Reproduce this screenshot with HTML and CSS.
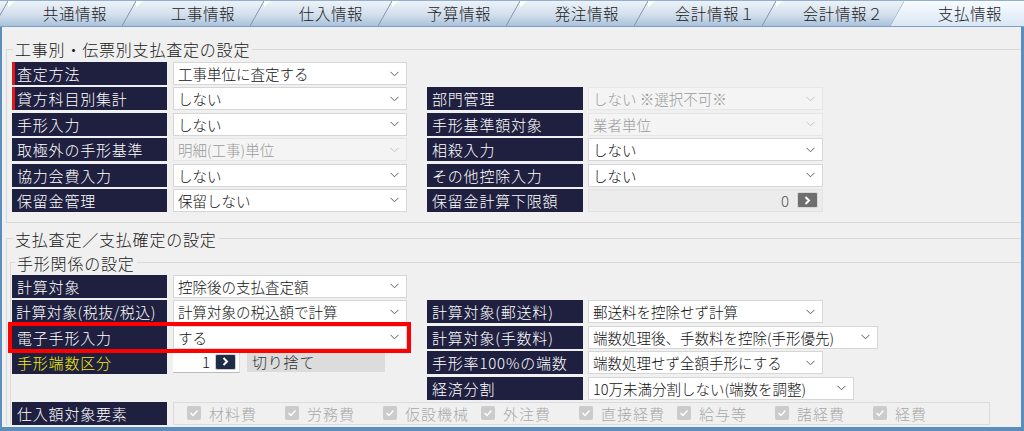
FILE: index.html
```html
<!DOCTYPE html>
<html lang="ja">
<head>
<meta charset="utf-8">
<title>支払情報</title>
<link rel="stylesheet" href="styles.css">
</head>
<body>
<div class="window">
  <div class="tabs">
    <div class="tab">共通情報</div>
    <div class="tab">工事情報</div>
    <div class="tab">仕入情報</div>
    <div class="tab">予算情報</div>
    <div class="tab">発注情報</div>
    <div class="tab">会計情報１</div>
    <div class="tab">会計情報２</div>
    <div class="tab active">支払情報</div>
  </div>
  <div class="content">
    <fieldset class="group g1">
      <legend>工事別・伝票別支払査定の設定</legend>
      <div class="grid">
        <div class="field"><div class="label req">査定方法</div><div class="select"><span>工事単位に査定する</span><svg class="chev" width="9" height="6" viewBox="0 0 9 6"><polyline points="0.5,0.8 4.5,4.8 8.5,0.8"/></svg></div></div>
        <div></div>
        <div class="field"><div class="label req">貸方科目別集計</div><div class="select"><span>しない</span><svg class="chev" width="9" height="6" viewBox="0 0 9 6"><polyline points="0.5,0.8 4.5,4.8 8.5,0.8"/></svg></div></div>
        <div class="field r"><div class="label">部門管理</div><div class="select dis"><span>しない ※選択不可※</span><svg class="chev" width="9" height="6" viewBox="0 0 9 6"><polyline points="0.5,0.8 4.5,4.8 8.5,0.8"/></svg></div></div>
        <div class="field"><div class="label">手形入力</div><div class="select"><span>しない</span><svg class="chev" width="9" height="6" viewBox="0 0 9 6"><polyline points="0.5,0.8 4.5,4.8 8.5,0.8"/></svg></div></div>
        <div class="field r"><div class="label">手形基準額対象</div><div class="select dis"><span>業者単位</span><svg class="chev" width="9" height="6" viewBox="0 0 9 6"><polyline points="0.5,0.8 4.5,4.8 8.5,0.8"/></svg></div></div>
        <div class="field"><div class="label">取極外の手形基準</div><div class="select dis"><span>明細(工事)単位</span><svg class="chev" width="9" height="6" viewBox="0 0 9 6"><polyline points="0.5,0.8 4.5,4.8 8.5,0.8"/></svg></div></div>
        <div class="field r"><div class="label">相殺入力</div><div class="select"><span>しない</span><svg class="chev" width="9" height="6" viewBox="0 0 9 6"><polyline points="0.5,0.8 4.5,4.8 8.5,0.8"/></svg></div></div>
        <div class="field"><div class="label">協力会費入力</div><div class="select"><span>しない</span><svg class="chev" width="9" height="6" viewBox="0 0 9 6"><polyline points="0.5,0.8 4.5,4.8 8.5,0.8"/></svg></div></div>
        <div class="field r"><div class="label">その他控除入力</div><div class="select"><span>しない</span><svg class="chev" width="9" height="6" viewBox="0 0 9 6"><polyline points="0.5,0.8 4.5,4.8 8.5,0.8"/></svg></div></div>
        <div class="field"><div class="label">保留金管理</div><div class="select"><span>保留しない</span><svg class="chev" width="9" height="6" viewBox="0 0 9 6"><polyline points="0.5,0.8 4.5,4.8 8.5,0.8"/></svg></div></div>
        <div class="field r"><div class="label">保留金計算下限額</div><div class="numfield"><span class="num">0</span><span class="btn gray"><svg width="7" height="9" viewBox="0 0 7 9"><polyline points="1.5,1 5,4.5 1.5,8"/></svg></span></div></div>
      </div>
    </fieldset>

    <fieldset class="group g2">
      <legend>支払査定／支払確定の設定</legend>
      <fieldset class="group g3">
        <legend>手形関係の設定</legend>
        <div class="grid">
          <div class="field"><div class="label">計算対象</div><div class="select"><span>控除後の支払査定額</span><svg class="chev" width="9" height="6" viewBox="0 0 9 6"><polyline points="0.5,0.8 4.5,4.8 8.5,0.8"/></svg></div></div>
          <div></div>
          <div class="field"><div class="label tight">計算対象(税抜/税込)</div><div class="select"><span>計算対象の税込額で計算</span><svg class="chev" width="9" height="6" viewBox="0 0 9 6"><polyline points="0.5,0.8 4.5,4.8 8.5,0.8"/></svg></div></div>
          <div class="field r"><div class="label">計算対象(郵送料)</div><div class="select"><span>郵送料を控除せず計算</span><svg class="chev" width="9" height="6" viewBox="0 0 9 6"><polyline points="0.5,0.8 4.5,4.8 8.5,0.8"/></svg></div></div>
          <div class="field marked"><div class="label">電子手形入力</div><div class="select"><span>する</span><svg class="chev" width="9" height="6" viewBox="0 0 9 6"><polyline points="0.5,0.8 4.5,4.8 8.5,0.8"/></svg></div></div>
          <div class="field r"><div class="label">計算対象(手数料)</div><div class="select w290"><span>端数処理後、手数料を控除(手形優先)</span><svg class="chev" width="9" height="6" viewBox="0 0 9 6"><polyline points="0.5,0.8 4.5,4.8 8.5,0.8"/></svg></div></div>
          <div class="field"><div class="label yellow">手形端数区分</div><div class="spin"><span class="num">1</span><span class="btn navy"><svg width="7" height="9" viewBox="0 0 7 9"><polyline points="1.5,1 5,4.5 1.5,8"/></svg></span></div><div class="readout">切り捨て</div></div>
          <div class="field r"><div class="label">手形率100%の端数</div><div class="select"><span>端数処理せず全額手形にする</span><svg class="chev" width="9" height="6" viewBox="0 0 9 6"><polyline points="0.5,0.8 4.5,4.8 8.5,0.8"/></svg></div></div>
          <div></div>
          <div class="field r"><div class="label">経済分割</div><div class="select w266"><span>10万未満分割しない(端数を調整)</span><svg class="chev" width="9" height="6" viewBox="0 0 9 6"><polyline points="0.5,0.8 4.5,4.8 8.5,0.8"/></svg></div></div>
          <div class="field span"><div class="label">仕入額対象要素</div>
            <div class="checks">
              <div class="chk"><span class="box"><svg width="14" height="14" viewBox="0 0 14 14"><polyline points="3.5,7 6,9.5 10.5,4.5"/></svg></span>材料費</div>
              <div class="chk"><span class="box"><svg width="14" height="14" viewBox="0 0 14 14"><polyline points="3.5,7 6,9.5 10.5,4.5"/></svg></span>労務費</div>
              <div class="chk"><span class="box"><svg width="14" height="14" viewBox="0 0 14 14"><polyline points="3.5,7 6,9.5 10.5,4.5"/></svg></span>仮設機械</div>
              <div class="chk"><span class="box"><svg width="14" height="14" viewBox="0 0 14 14"><polyline points="3.5,7 6,9.5 10.5,4.5"/></svg></span>外注費</div>
              <div class="chk"><span class="box"><svg width="14" height="14" viewBox="0 0 14 14"><polyline points="3.5,7 6,9.5 10.5,4.5"/></svg></span>直接経費</div>
              <div class="chk"><span class="box"><svg width="14" height="14" viewBox="0 0 14 14"><polyline points="3.5,7 6,9.5 10.5,4.5"/></svg></span>給与等</div>
              <div class="chk"><span class="box"><svg width="14" height="14" viewBox="0 0 14 14"><polyline points="3.5,7 6,9.5 10.5,4.5"/></svg></span>諸経費</div>
              <div class="chk"><span class="box"><svg width="14" height="14" viewBox="0 0 14 14"><polyline points="3.5,7 6,9.5 10.5,4.5"/></svg></span>経費</div>
            </div>
          </div>
        </div>
      </fieldset>
    </fieldset>
  </div>
</div>
</body>
</html>
```

FILE: styles.css
```css
* { box-sizing: border-box; }
html, body { margin: 0; padding: 0; }
body {
  width: 1024px;
  height: 431px;
  overflow: hidden;
  background: #f0f0f0;
  font-family: "Noto Sans CJK JP", "Noto Sans", sans-serif;
  font-weight: 300;
  color: #1a1a1a;
}
.window {
  width: 1024px;
  height: 431px;
  display: flex;
  flex-direction: column;
}

/* tabs */
.tabs {
  flex: none;
  height: 27px;
  width: 1030px;
  margin-left: -6px;
  display: flex;
  background: linear-gradient(#edf2f8, #d3dfec 55%, #a9c2dc);
  border-top: 1px solid #8fb0cf;
  border-bottom: 1px solid #7d9fc3;
  overflow: hidden;
}
.tab {
  position: relative;
  flex: none;
  width: 128px;
  padding-left: 34px;
  text-align: center;
  font-size: 15.5px;
  letter-spacing: 0.6px;
  line-height: 25px;
  color: #1c1c1c;
  white-space: nowrap;
}
.tab::before {
  content: "";
  position: absolute;
  left: 0;
  top: 0;
  width: 14px;
  height: 100%;
  background: linear-gradient(to bottom right, transparent calc(50% - 0.8px), #7f8fa2 50%, transparent calc(50% + 0.8px));
}
.tab::after {
  content: "";
  position: absolute;
  left: 14px;
  top: 0;
  width: 7px;
  height: 6px;
  background: #ffffff;
  clip-path: polygon(0 0, 100% 0, 0 100%);
}
.tab.active {
  flex: 1;
  padding-left: 26px;
  background: linear-gradient(#f8fbfe, #d9e7f5);
  clip-path: polygon(0 100%, 14px 0, 100% 0, 100% 100%);
}
.tab.active::after { display: none; }

/* content */
.content {
  flex: 1;
  min-height: 0;
  border-left: 2px solid #5b8dbd;
  border-right: 3px solid #5b8dbd;
  border-bottom: 4px solid #5b8dbd;
  padding-left: 4px;
  overflow: hidden;
}
.group {
  margin: 0;
  min-width: 0;
  border: 1px solid #d9d9d9;
  border-right: none;
}
.group legend {
  font-size: 16px;
  line-height: 20px;
  letter-spacing: 0.8px;
  padding: 0 2px;
  color: #1a1a1a;
}
.g1 { margin-top: 12px; padding: 3px 0 10px 5px; }
.g1 > legend { margin-left: 1px; }
.g2 { margin-top: 6px; padding: 4px 0 0 3px; border-bottom: none; }
.g2 > legend { margin-left: 3px; }
.g3 { padding: 2px 0 0 1px; border-bottom: none; }
.g3 > legend { margin-left: 3px; }

.grid {
  display: grid;
  grid-template-columns: 395px 396px;
  column-gap: 20px;
  row-gap: 2.4px;
}
.field {
  display: flex;
  height: 23px;
  gap: 6px;
}
.field.r { gap: 5px; }
.field.span { grid-column: 1 / -1; }
.field.marked {
  position: relative;
  z-index: 1;
  outline: 4px solid #ff0000;
}

.label {
  position: relative;
  flex: none;
  width: 155px;
  background: #1f1f40;
  color: #ffffff;
  font-size: 15px;
  line-height: 23px;
  letter-spacing: 0.8px;
  padding-left: 5px;
  white-space: nowrap;
  overflow: hidden;
}
.field.r .label { width: 156px; }
.label.tight { letter-spacing: 0.4px; padding-left: 4px; }
.label.yellow { color: #f2f000; }
.label.req::before {
  content: "";
  position: absolute;
  left: 0;
  top: 0;
  bottom: 0;
  width: 3px;
  background: #e8141c;
}

.select {
  flex: none;
  width: 234px;
  height: 23px;
  background: #ffffff;
  border: 1px solid #d6d6d6;
  display: flex;
  align-items: center;
  justify-content: space-between;
  padding-left: 4px;
  font-size: 14.5px;
  line-height: 21px;
  color: #111;
  white-space: nowrap;
}
.field.r .select { width: 235px; }
.field.r .select.w290 { width: 290px; }
.field.r .select.w266 { width: 266px; }
.select.dis {
  background: #f4f4f4;
  border-color: #e6e6e6;
  color: #9a9a9a;
}
.chev { flex: none; margin-right: 7px; }
.chev polyline { fill: none; stroke: #5c5c5c; stroke-width: 1; }
.select.dis .chev polyline { stroke: #c2c2c2; }

.numfield {
  flex: none;
  width: 235px;
  height: 23px;
  background: #ececec;
  border: 1px solid #e2e2e2;
  display: flex;
  align-items: center;
  justify-content: flex-end;
  gap: 8px;
  padding-right: 4px;
}
.num { font-size: 15px; line-height: 21px; color: #555; }
.btn {
  width: 21px;
  height: 16px;
  display: flex;
  align-items: center;
  justify-content: center;
  border: 1px solid #d8d8d8;
  border-radius: 2px;
}
.btn.gray { background: #6f6f6f; }
.btn.navy { background: #1f2c46; border-color: #c8ccd4; }
.btn polyline { fill: none; stroke: #ffffff; stroke-width: 2; }

.spin {
  flex: none;
  width: 67px;
  height: 22px;
  background: #ffffff;
  border-bottom: 1px solid #b9b9b9;
  border-right: 1px solid #e0e0e0;
  display: flex;
  align-items: center;
  justify-content: flex-end;
  gap: 5px;
  padding-right: 3px;
}
.spin .num { color: #111; }
.readout {
  flex: none;
  width: 138px;
  height: 21px;
  margin-left: 1px;
  background: #dcdcdc;
  font-size: 15px;
  line-height: 21px;
  letter-spacing: 0.8px;
  padding-left: 5px;
  color: #333;
}

.checks {
  flex: none;
  width: 817px;
  height: 23px;
  border: 1px solid #dcdcdc;
  display: grid;
  grid-template-columns: repeat(8, 98px);
  align-items: center;
  padding-left: 13px;
}
.chk {
  display: flex;
  align-items: center;
  gap: 8px;
  font-size: 15px;
  letter-spacing: 1px;
  color: #a8a8a8;
  white-space: nowrap;
}
.box {
  flex: none;
  width: 14px;
  height: 14px;
  border-radius: 2px;
  background: #cbcbcb;
  display: block;
}
.box svg { display: block; }
.box polyline { fill: none; stroke: #ffffff; stroke-width: 1.4; }
```
